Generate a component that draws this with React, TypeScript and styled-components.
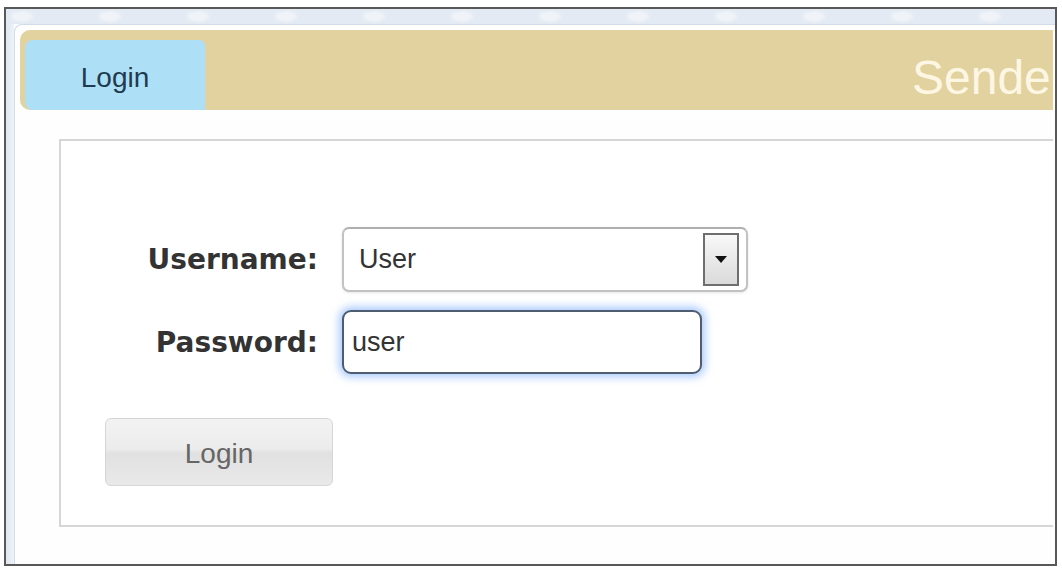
import React from "react";
import styled, { createGlobalStyle } from "styled-components";

const Global = createGlobalStyle`
  html, body { margin: 0; padding: 0; background: #ffffff; }
  body { font-family: "Liberation Sans", Arial, sans-serif; }
`;

const Frame = styled.div`
  box-sizing: border-box;
  width: 1053px;
  height: 559px;
  margin: 7px 0 0 4px;
  border: 2px solid #585858;
  background: #fdfdfe;
  display: flex;
  flex-direction: column;
  overflow: hidden;
`;

const TopStrip = styled.div`
  height: 15px;
  flex-shrink: 0;
  background-color: #e3eaf3;
  background-image: radial-gradient(ellipse 14px 7px at 50% 50%, #f0f4f9 0%, #f0f4f9 50%, rgba(240, 244, 249, 0) 100%);
  background-size: 88px 15px;
  background-position: 60px 0;
  background-repeat: repeat-x;
`;

const Main = styled.div`
  flex: 1;
  display: flex;
  min-height: 0;
`;

const SideStrip = styled.div`
  width: 8px;
  flex-shrink: 0;
  background: linear-gradient(to right, #dfe7f1, #eef3f9);
`;

const Content = styled.div`
  flex: 1;
  min-width: 0;
  border-left: 1px solid #d3dbe6;
  border-top: 1px solid #d3dbe6;
  border-top-left-radius: 8px;
  background: #fefefe;
  padding: 5px 2px 0 5px;
  overflow: hidden;
`;

const Header = styled.div`
  height: 80px;
  background: #e1d29f;
  border-radius: 10px 0 0 10px;
  display: flex;
  align-items: flex-end;
  padding-left: 5px;
  overflow: hidden;
`;

const Tab = styled.div`
  box-sizing: border-box;
  width: 180px;
  height: 70px;
  flex-shrink: 0;
  background: #ade0f7;
  border-radius: 8px 6px 0 8px;
  display: flex;
  align-items: center;
  justify-content: center;
  padding-top: 6px;
  font-size: 28px;
  color: #1e3b4f;
`;

const Title = styled.div`
  margin-left: 707px;
  align-self: center;
  padding-top: 14px;
  font-size: 48px;
  color: #fdf6e3;
  white-space: nowrap;
  flex-shrink: 0;
`;

const Panel = styled.div`
  box-sizing: border-box;
  margin: 29px 0 0 39px;
  height: 388px;
  border: 2px solid #d6d6d6;
  border-right: none;
  background: #ffffff;
  padding-top: 86px;
`;

const Form = styled.div`
  display: grid;
  grid-template-columns: 257px auto;
  column-gap: 24px;
  row-gap: 18px;
  align-items: center;
  justify-content: start;
`;

const Label = styled.label`
  text-align: right;
  font-family: "DejaVu Sans", Verdana, sans-serif;
  font-weight: bold;
  font-size: 28px;
  color: #333333;
`;

const SelectBox = styled.div`
  box-sizing: border-box;
  width: 406px;
  height: 65px;
  border: 2px solid #c2c2c2;
  border-top-color: #b0b0b0;
  border-radius: 7px;
  background: #ffffff;
  display: flex;
  align-items: center;
  padding: 0 7px 0 15px;
  box-shadow: 0 1px 3px rgba(0, 0, 0, 0.1);
`;

const SelectText = styled.span`
  flex: 1;
  font-size: 27px;
  color: #333333;
`;

const ArrowButton = styled.div`
  box-sizing: border-box;
  width: 36px;
  height: 53px;
  border: 2px solid #6e6e6e;
  background: linear-gradient(#f8f8f8, #dadada);
  display: flex;
  align-items: center;
  justify-content: center;
`;

const Caret = styled.span`
  width: 0;
  height: 0;
  border-left: 6px solid transparent;
  border-right: 6px solid transparent;
  border-top: 7px solid #111111;
`;

const TextInput = styled.input`
  box-sizing: border-box;
  width: 360px;
  height: 64px;
  border: 2px solid #4f5d73;
  border-radius: 9px;
  padding: 0 0 0 8px;
  font-family: "Liberation Sans", Arial, sans-serif;
  font-size: 27px;
  color: #333333;
  background: #ffffff;
  box-shadow: 0 0 9px 3px rgba(110, 165, 250, 0.6);
  outline: none;
`;

const LoginButton = styled.button`
  box-sizing: border-box;
  display: block;
  width: 228px;
  height: 68px;
  margin: 44px 0 0 44px;
  padding-top: 5px;
  border: 1px solid #d6d6d6;
  border-radius: 6px;
  background: linear-gradient(#f2f2f2 0%, #ececec 45%, #e1e1e1 52%, #e9e9e9 100%);
  font-family: "Liberation Sans", Arial, sans-serif;
  font-size: 28px;
  color: #666666;
`;

export default function App() {
  return (
    <>
      <Global />
      <Frame>
        <TopStrip />
        <Main>
          <SideStrip />
          <Content>
            <Header>
              <Tab>Login</Tab>
              <Title>Sende</Title>
            </Header>
            <Panel>
              <Form>
                <Label>Username:</Label>
                <SelectBox>
                  <SelectText>User</SelectText>
                  <ArrowButton>
                    <Caret />
                  </ArrowButton>
                </SelectBox>
                <Label>Password:</Label>
                <TextInput type="text" defaultValue="user" readOnly />
              </Form>
              <LoginButton>Login</LoginButton>
            </Panel>
          </Content>
        </Main>
      </Frame>
    </>
  );
}
